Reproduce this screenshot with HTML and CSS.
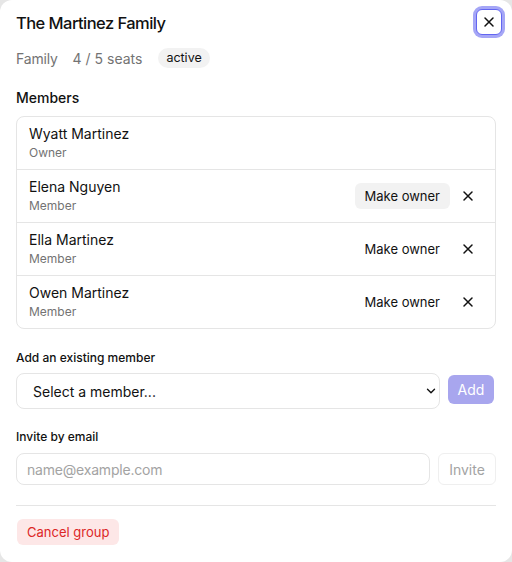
FILE: index.html
```html
<!DOCTYPE html>
<html lang="en">
<head>
<meta charset="utf-8">
<title>The Martinez Family</title>
<link rel="stylesheet" href="styles.css">
</head>
<body>
<div class="dialog">
  <div class="header">
    <h1 class="title">The Martinez Family</h1>
    <button class="close-btn" aria-label="Close">
      <svg width="16" height="16" viewBox="0 0 16 16"><path d="M4 4l8 8M12 4l-8 8" stroke="#111" stroke-width="1.5" stroke-linecap="round" fill="none"/></svg>
    </button>
  </div>
  <div class="meta">
    <span>Family</span>
    <span>4 / 5 seats</span>
    <span class="badge">active</span>
  </div>
  <h2 class="section-label">Members</h2>
  <ul class="members">
    <li class="member">
      <div class="info"><div class="name">Wyatt Martinez</div><div class="role">Owner</div></div>
    </li>
    <li class="member">
      <div class="info"><div class="name">Elena Nguyen</div><div class="role">Member</div></div>
      <div class="actions">
        <button class="owner-btn hover">Make owner</button>
        <button class="remove-btn" aria-label="Remove"><svg width="16" height="16" viewBox="0 0 16 16"><path d="M4 4l8 8M12 4l-8 8" stroke="#111" stroke-width="1.5" stroke-linecap="round" fill="none"/></svg></button>
      </div>
    </li>
    <li class="member">
      <div class="info"><div class="name">Ella Martinez</div><div class="role">Member</div></div>
      <div class="actions">
        <button class="owner-btn">Make owner</button>
        <button class="remove-btn" aria-label="Remove"><svg width="16" height="16" viewBox="0 0 16 16"><path d="M4 4l8 8M12 4l-8 8" stroke="#111" stroke-width="1.5" stroke-linecap="round" fill="none"/></svg></button>
      </div>
    </li>
    <li class="member">
      <div class="info"><div class="name">Owen Martinez</div><div class="role">Member</div></div>
      <div class="actions">
        <button class="owner-btn">Make owner</button>
        <button class="remove-btn" aria-label="Remove"><svg width="16" height="16" viewBox="0 0 16 16"><path d="M4 4l8 8M12 4l-8 8" stroke="#111" stroke-width="1.5" stroke-linecap="round" fill="none"/></svg></button>
      </div>
    </li>
  </ul>
  <div class="field-label first">Add an existing member</div>
  <div class="row select-row">
    <div class="select-wrap">
      <select class="select"><option>Select a member...</option></select>
      <svg class="chevron" width="10" height="6" viewBox="0 0 10 6"><path d="M1.5 1.2l3.5 3.5 3.5-3.5" stroke="#111" stroke-width="1.4" fill="none" stroke-linecap="round" stroke-linejoin="round"/></svg>
    </div>
    <button class="add-btn">Add</button>
  </div>
  <div class="field-label">Invite by email</div>
  <div class="row invite-row">
    <input class="email" type="text" placeholder="name@example.com">
    <button class="invite-btn">Invite</button>
  </div>
  <hr class="divider">
  <button class="cancel-btn">Cancel group</button>
</div>
</body>
</html>
```

FILE: styles.css
```css
* { box-sizing: border-box; }
html, body { margin: 0; padding: 0; }
body {
  background: #e6e6e6;
  font-family: Inter, "Noto Sans", sans-serif;
  color: #111;
}
.dialog {
  width: 512px;
  height: 562px;
  background: #fff;
  border-radius: 12px;
  padding: 8px 16px 16px;
}
.header {
  display: flex;
  align-items: center;
  justify-content: space-between;
  height: 28px;
}
.title {
  margin: 2px 0 0;
  font-size: 16.5px;
  font-weight: 500;
  letter-spacing: -0.55px;
  line-height: 24px;
}
.close-btn {
  width: 26px;
  height: 26px;
  margin-right: -6px;
  padding: 0;
  display: flex;
  align-items: center;
  justify-content: center;
  background: #fff;
  border: 1px solid #6366f1;
  border-radius: 6px;
  box-shadow: 0 0 0 3px #a5a6f6;
}
.meta {
  display: flex;
  align-items: center;
  gap: 15px;
  margin-top: 12px;
  height: 20px;
  font-size: 14px;
  color: #737373;
}
.meta span:first-child { letter-spacing: -0.2px; }
.badge {
  background: #f2f2f2;
  color: #111;
  font-size: 12.5px;
  line-height: 20px;
  padding: 0 8px;
  border-radius: 10px;
  margin-left: 1px;
}
.section-label {
  margin: 20px 0 0;
  font-size: 14px;
  font-weight: 500;
  line-height: 20px;
}
.members {
  list-style: none;
  margin: 8px 0 0;
  padding: 0;
  border: 1px solid #e5e5e5;
  border-radius: 8px;
}
.member {
  display: flex;
  align-items: center;
  justify-content: space-between;
  height: 53px;
  padding: 1px 13px 0 12px;
  border-bottom: 1px solid #e5e5e5;
}
.member:last-child {
  border-bottom: none;
  height: 52px;
}
.info {
  display: flex;
  flex-direction: column;
  gap: 1px;
}
.name {
  font-size: 14px;
  line-height: 18px;
}
.role {
  font-size: 12px;
  line-height: 18px;
  color: #737373;
}
.actions {
  display: flex;
  align-items: center;
  gap: 4px;
  margin-top: -1px;
}
.owner-btn {
  height: 26px;
  padding: 0 10px;
  font-family: inherit;
  font-size: 13px;
  color: #111;
  background: transparent;
  border: none;
  border-radius: 6px;
}
.owner-btn.hover { background: #f2f2f2; }
.remove-btn {
  width: 28px;
  height: 28px;
  padding: 0;
  display: flex;
  align-items: center;
  justify-content: center;
  background: transparent;
  border: none;
}
.field-label {
  margin-top: 19px;
  font-size: 12px;
  font-weight: 500;
  line-height: 18px;
}
.field-label.first { margin-top: 20px; }
.row {
  display: flex;
  gap: 8px;
}
.select-row {
  align-items: flex-start;
  margin-top: 6px;
}
.invite-row {
  align-items: center;
  margin-top: 7px;
}
.select-wrap {
  position: relative;
  flex: 1;
}
.select {
  display: block;
  width: 100%;
  height: 36px;
  appearance: none;
  -webkit-appearance: none;
  background: #fff;
  border: 1px solid #e5e5e5;
  border-radius: 8px;
  padding: 0 16px;
  font-family: inherit;
  font-size: 14px;
  color: #111;
}
.chevron {
  position: absolute;
  right: 4px;
  top: 15px;
}
.add-btn {
  width: 46px;
  height: 29px;
  margin: 2px 2px 0 0;
  padding: 0;
  background: #a8a6ee;
  color: #fff;
  border: none;
  border-radius: 6px;
  font-family: inherit;
  font-size: 14px;
}
.email {
  flex: 1;
  height: 32px;
  border: 1px solid #e5e5e5;
  border-radius: 8px;
  padding: 0 10px;
  font-family: inherit;
  font-size: 14px;
  color: #111;
}
.email::placeholder { color: #a3a3a3; letter-spacing: -0.2px; }
.invite-btn {
  width: 58px;
  height: 32px;
  padding: 0;
  background: #fff;
  border: 1px solid #efefef;
  border-radius: 6px;
  font-family: inherit;
  font-size: 14px;
  color: #a3a3a3;
}
.divider {
  margin: 20px 0 0;
  border: none;
  border-top: 1px solid #e5e5e5;
}
.cancel-btn {
  display: block;
  margin: 13px 0 0 1px;
  height: 26px;
  padding: 0 10px;
  background: #fde7e7;
  color: #dc2626;
  border: none;
  border-radius: 6px;
  font-family: inherit;
  font-size: 13px;
}
```
